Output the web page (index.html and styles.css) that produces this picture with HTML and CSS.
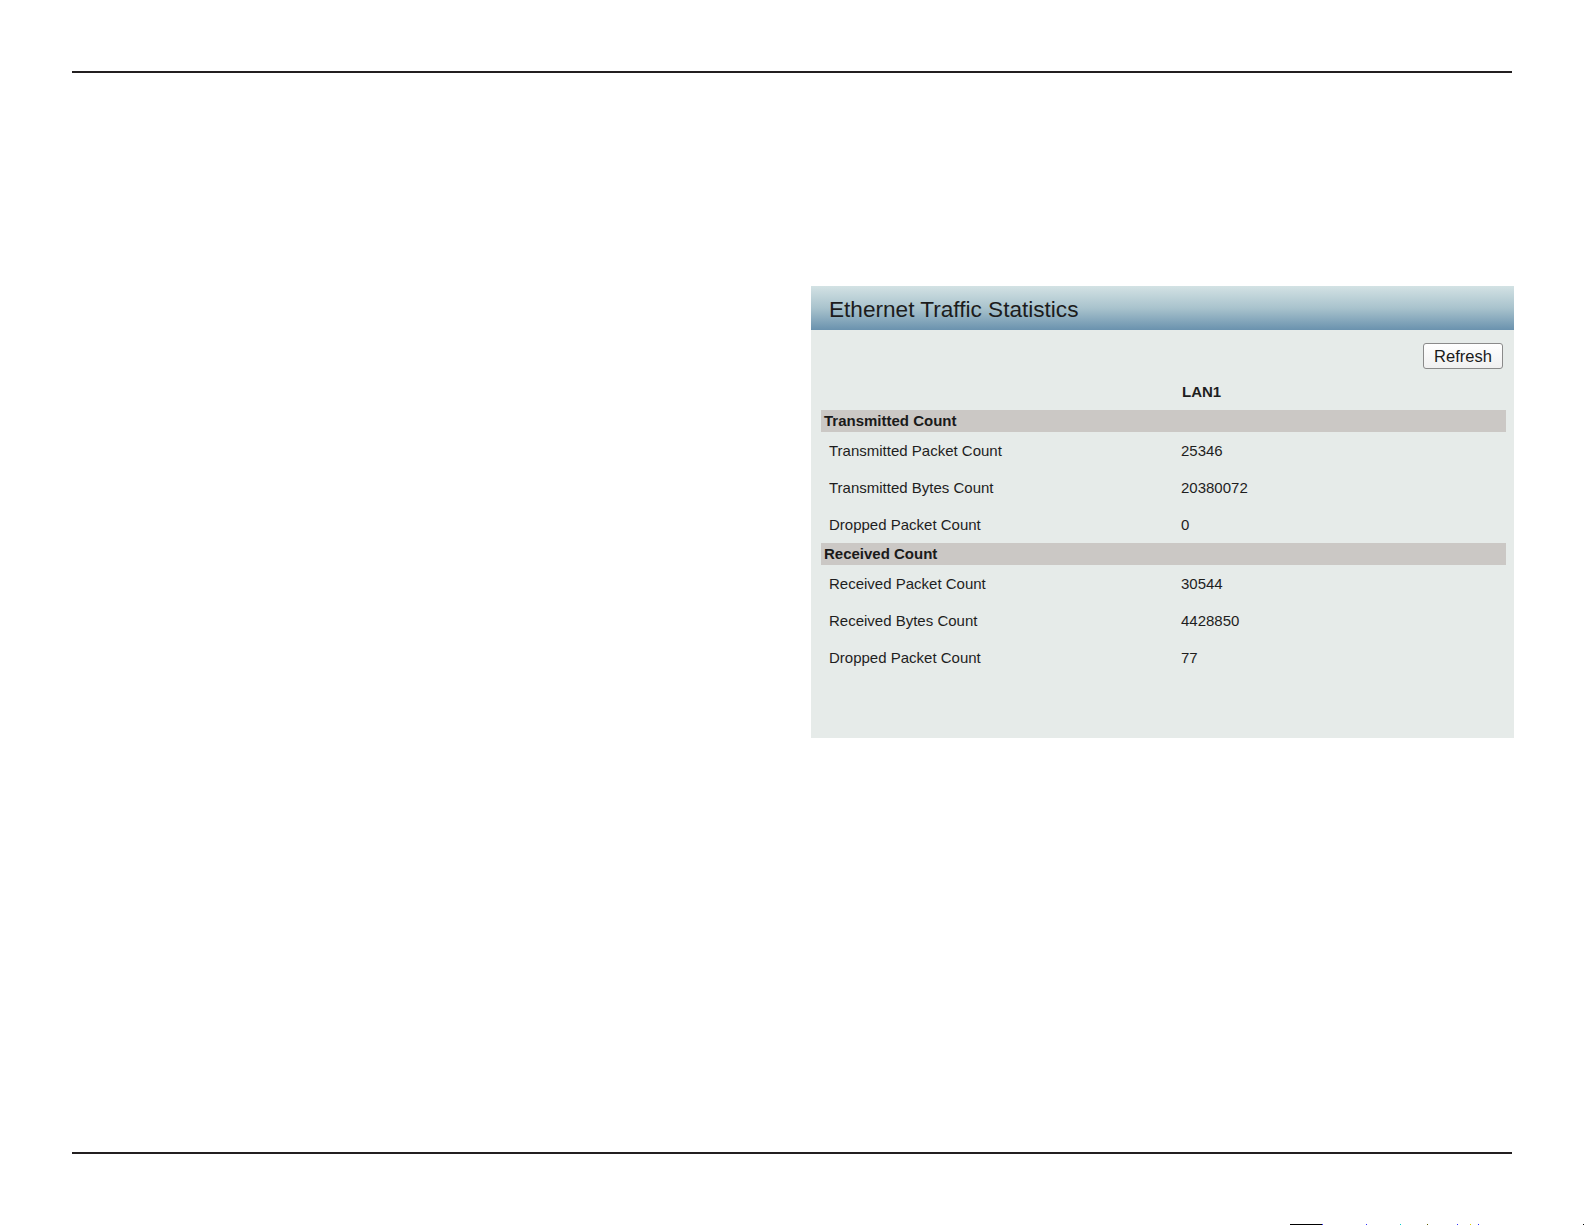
FILE: index.html
```html
<!DOCTYPE html>
<html lang="en">
<head>
<meta charset="utf-8">
<title>Ethernet Traffic Statistics</title>
<link rel="stylesheet" href="styles.css">
</head>
<body>
<div class="page">
  <hr class="rule rule-top">
  <div class="content">
    <div class="left-col"></div>
    <section class="panel">
      <header class="panel-head"><h1 class="panel-title">Ethernet Traffic Statistics</h1></header>
      <div class="panel-body">
        <div class="actions"><button class="btn" type="button">Refresh</button></div>
        <div class="stats">
          <div class="cell head-label"></div><div class="cell head-value">LAN1</div>
          <div class="band">Transmitted Count</div>
          <div class="cell label">Transmitted Packet Count</div><div class="cell value">25346</div>
          <div class="cell label">Transmitted Bytes Count</div><div class="cell value">20380072</div>
          <div class="cell label">Dropped Packet Count</div><div class="cell value">0</div>
          <div class="band">Received Count</div>
          <div class="cell label">Received Packet Count</div><div class="cell value">30544</div>
          <div class="cell label">Received Bytes Count</div><div class="cell value">4428850</div>
          <div class="cell label">Dropped Packet Count</div><div class="cell value">77</div>
        </div>
      </div>
    </section>
  </div>
  <hr class="rule rule-bottom">
  <div class="edge">
    <svg class="edge-svg" width="1585" height="1" viewBox="0 0 1585 1">
      <rect x="1290" y="0" width="32" height="1" fill="#000"/>
      <rect x="1322" y="0" width="1" height="1" fill="#3030ff"/>
      <rect x="1366" y="0" width="1" height="1" fill="#3030ff"/>
      <rect x="1400" y="0" width="1" height="1" fill="#00d0d0"/>
      <rect x="1427" y="0" width="1" height="1" fill="#606000"/>
      <rect x="1457" y="0" width="1" height="1" fill="#3030ff"/>
      <rect x="1470" y="0" width="1" height="1" fill="#e0d000"/>
      <rect x="1478" y="0" width="1" height="1" fill="#3030ff"/>
      <rect x="1583" y="0" width="1" height="1" fill="#000"/>
    </svg>
  </div>
</div>
</body>
</html>
```
FILE: styles.css
```css
html, body {
  margin: 0;
  padding: 0;
  background: #ffffff;
}

body {
  font-family: "Liberation Sans", Arial, sans-serif;
  color: #1e1e1e;
}

.page {
  width: 1585px;
  height: 1225px;
  display: flex;
  flex-direction: column;
  overflow: hidden;
}

.rule {
  border: 0;
  margin: 0 0 0 72px;
  width: 1440px;
  height: 2px;
  background: #231f20;
}

.rule-top {
  margin-top: 71px;
}

.rule-bottom {
  margin-top: 414px;
}

.content {
  display: grid;
  grid-template-columns: 811px 703px;
  margin-top: 213px;
}

.panel {
  background: #e6ebe9;
  height: 452px;
  display: flex;
  flex-direction: column;
}

.panel-head {
  height: 44px;
  box-sizing: border-box;
  padding: 11px 0 0 18px;
  background: linear-gradient(to bottom, #d3e2e4 0%, #a9c3cd 50%, #6a92ae 100%);
}

.panel-title {
  margin: 0;
  font-size: 22.6px;
  line-height: 26px;
  font-weight: normal;
  color: #1c1c1c;
}

.panel-body {
  padding: 13px 8px 0 10px;
}

.actions {
  display: flex;
  justify-content: flex-end;
  padding-right: 3px;
}

.btn {
  font-family: "Liberation Sans", Arial, sans-serif;
  font-size: 16.5px;
  line-height: 20px;
  height: 26px;
  width: 80px;
  padding: 0;
  color: #1a1a1a;
  background: linear-gradient(to bottom, #ffffff, #f0f0f0);
  border: 1px solid #8a8a8a;
  border-radius: 3px;
}

.stats {
  margin-top: 5px;
  display: grid;
  grid-template-columns: 352px 1fr;
  font-size: 15px;
  line-height: 18px;
}

.cell {
  height: 37px;
  display: flex;
  align-items: center;
  padding-left: 8px;
}

.head-label,
.head-value {
  height: 36px;
}

.head-value {
  font-weight: bold;
  padding-left: 9px;
}

.band {
  grid-column: 1 / span 2;
  height: 22px;
  box-sizing: border-box;
  padding: 2px 0 0 3px;
  background: #cbc8c5;
  font-weight: bold;
  color: #1a1a1a;
}

.edge {
  margin-top: auto;
  height: 1px;
  line-height: 0;
}

.edge-svg {
  display: block;
}
```
